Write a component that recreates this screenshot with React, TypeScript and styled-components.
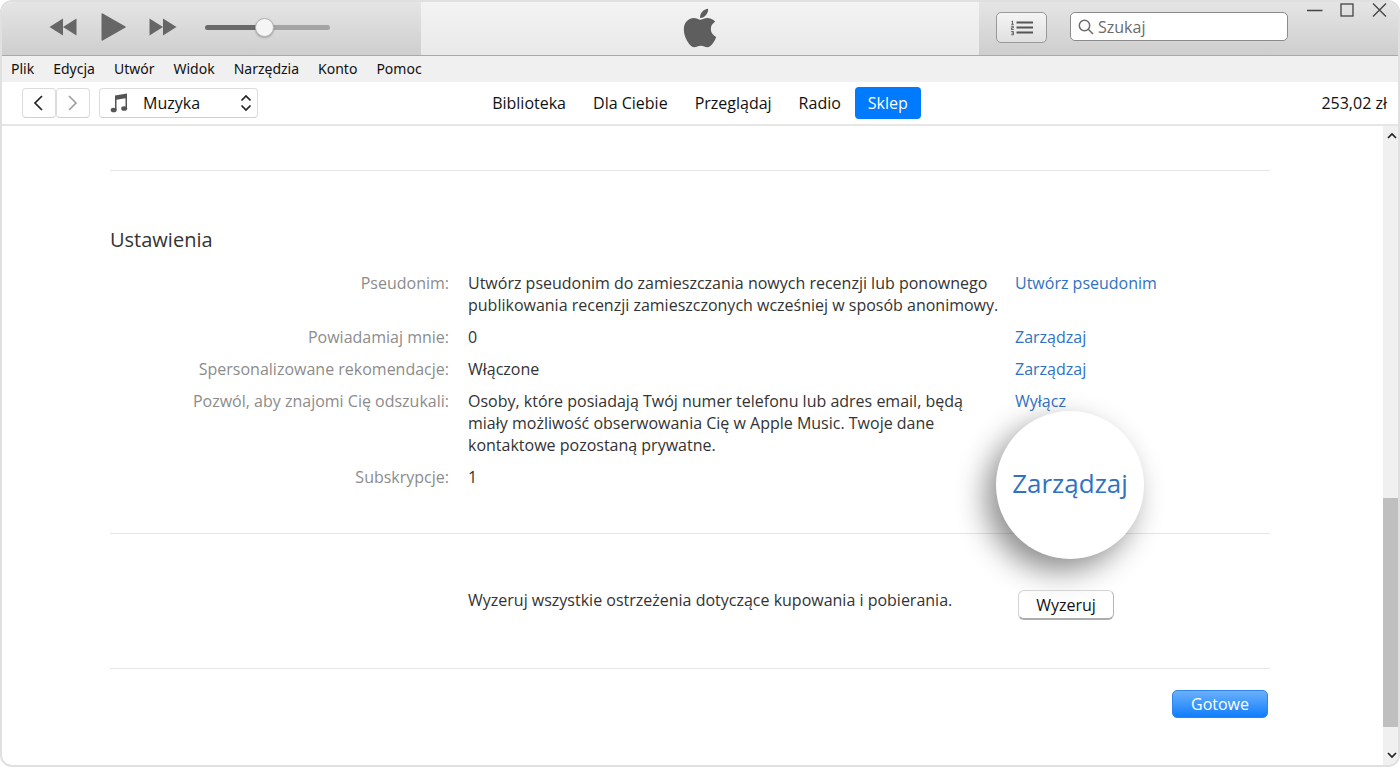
import React, { useState } from "react";
import styled, { createGlobalStyle } from "styled-components";
import { FaApple } from "react-icons/fa";

const GlobalStyle = createGlobalStyle`
  *, *::before, *::after { box-sizing: border-box; }
  body {
    margin: 0;
    background: #fff;
    color: #111;
    font-family: "Open Sans", "Noto Sans", sans-serif;
    font-size: 16px;
    line-height: 22px;
  }
  button, input, select { font: inherit; color: inherit; margin: 0; }
  button { padding: 0; border: 0; background: none; }
  svg { display: block; }
`;

const Page = styled.div`
  display: flex;
  min-height: 100vh;
  padding-bottom: 1px;
`;

const Window = styled.div`
  flex: 1;
  display: flex;
  flex-direction: column;
  border: 2px solid #e0e0e0;
  border-radius: 12px;
  overflow: hidden;
`;

const TitleBar = styled.header`
  display: grid;
  grid-template-columns: 3fr 4fr 3fr;
  height: 54px;
  border-bottom: 1px solid #a9a9a9;
  background: linear-gradient(#e5e5e5, #cecece);
`;

const Playback = styled.div`
  display: flex;
  align-items: center;
  gap: 28px;
  padding: 0 0 3px 47px;
  color: #666;
`;

const PlaybackButtons = styled.div`
  display: flex;
  align-items: center;
  gap: 22px;
`;

const Volume = styled.input<{ $level: number }>`
  appearance: none;
  width: 125px;
  height: 20px;
  background: transparent;
  &::-webkit-slider-runnable-track {
    height: 5px;
    border-radius: 3px;
    background: linear-gradient(
      to right,
      #6a6a6a ${(p) => p.$level}%,
      #a4a4a4 ${(p) => p.$level}%
    );
  }
  &::-webkit-slider-thumb {
    appearance: none;
    width: 19px;
    height: 19px;
    margin-top: -7px;
    border: 1px solid #b4b4b4;
    border-radius: 50%;
    background: #f5f5f5;
    box-shadow: 0 1px 2px rgba(0, 0, 0, 0.25);
  }
`;

const Display = styled.div`
  display: flex;
  justify-content: center;
  align-items: center;
  padding-bottom: 2px;
  background: linear-gradient(#f3f3f3, #e9e9e9);
  color: #5e5e5e;
  font-size: 44px;
`;

const TitleTools = styled.div`
  display: flex;
  justify-content: flex-end;
  padding-right: 11px;
`;

const QueueButton = styled.button`
  display: flex;
  align-items: center;
  justify-content: center;
  width: 51px;
  height: 31px;
  margin: 10px 23px 0 0;
  border: 1px solid #999;
  border-radius: 5px;
  background: linear-gradient(#f4f4f4, #e0e0e0);
`;

const Search = styled.label`
  display: flex;
  align-items: center;
  gap: 4px;
  width: 218px;
  height: 29px;
  margin: 10px 19px 0 0;
  padding: 0 7px;
  border: 1px solid #8a8a8a;
  border-radius: 5px;
  background: #fff;
  color: #6b6b6b;
  input {
    flex: 1;
    min-width: 0;
    padding: 0;
    border: 0;
    outline: 0;
    background: none;
  }
  input::placeholder { color: #6b6b6b; opacity: 1; }
`;

const WindowButtons = styled.div`
  display: flex;
  gap: 16px;
  height: 16px;
`;

const MenuBar = styled.nav`
  display: flex;
  gap: 19px;
  height: 26px;
  padding: 0 9px;
  background: #f0f0f0;
  font-family: "Noto Sans", "Open Sans", sans-serif;
  font-size: 14px;
  line-height: 26px;
`;

const Toolbar = styled.div`
  display: grid;
  grid-template-columns: 1fr auto 1fr;
  align-items: center;
  height: 44px;
  padding: 0 11px;
  border-bottom: 2px solid #e6e6e6;
`;

const ToolbarLeft = styled.div`
  display: flex;
  gap: 9px;
  padding-left: 9px;
`;

const History = styled.div`
  display: flex;
`;

const HistoryButton = styled.button`
  display: flex;
  align-items: center;
  justify-content: center;
  width: 34px;
  height: 30px;
  border: 1px solid #dcdcdc;
  border-bottom-color: #cfcfcf;
  border-radius: 4px;
`;

const Library = styled.label`
  display: grid;
  align-items: center;
  width: 159px;
  height: 30px;
  border: 1px solid #dcdcdc;
  border-bottom-color: #cfcfcf;
  border-radius: 4px;
  > * { grid-area: 1 / 1; }
  > svg { margin-left: 10px; pointer-events: none; }
  > svg:last-child { justify-self: end; margin-right: 5px; }
  select {
    appearance: none;
    width: 100%;
    height: 28px;
    padding: 0 0 0 43px;
    border: 0;
    background: transparent;
  }
`;

const Tabs = styled.nav`
  display: flex;
  gap: 1px;
`;

const Tab = styled.a<{ $active?: boolean }>`
  height: 32px;
  padding: 0 13px;
  border-radius: 4px;
  background: ${(p) => (p.$active ? "#007aff" : "transparent")};
  color: ${(p) => (p.$active ? "#fff" : "#111")};
  line-height: 32px;
  text-decoration: none;
`;

const Balance = styled.div`
  text-align: right;
`;

const Body = styled.div`
  flex: 1;
  display: flex;
`;

const Content = styled.main`
  flex: 1;
  padding: 44px 113px 24px 108px;
  color: #333;
`;

const Section = styled.section`
  border-top: 1px solid #e6e6e6;
`;

const Heading = styled.h1`
  margin: 0;
  padding: 54px 0 17px;
  font-size: 20px;
  font-weight: 400;
  line-height: 30px;
`;

const Row = styled.div`
  display: grid;
  grid-template-columns: 358px 547px 1fr;
`;

const Settings = styled.div`
  display: grid;
  row-gap: 10px;
  padding-bottom: 45px;
`;

const Label = styled.div`
  padding-right: 19px;
  color: #8c8c8c;
  text-align: right;
`;

const Value = styled.div`
  grid-column: 2;
  padding-right: 12px;
`;

const Action = styled.div`
  position: relative;
`;

const Link = styled.a`
  color: #2f72c4;
  text-decoration: none;
`;

const Magnifier = styled(Link)`
  position: absolute;
  top: -55px;
  left: -19px;
  width: 148px;
  height: 148px;
  border-radius: 50%;
  background: #fff;
  box-shadow: -10px 12px 30px rgba(0, 0, 0, 0.45);
  font-size: 26px;
  line-height: 144px;
  text-align: center;
`;

const ResetRow = styled(Row)`
  padding: 55px 0 48px;
`;

const ResetButton = styled.button`
  width: 96px;
  height: 30px;
  margin: 1px 0 0 3px;
  border: 1px solid #d4d4d4;
  border-right-color: #b4b4b4;
  border-bottom: 2px solid #adadad;
  border-radius: 6px;
  color: #111;
`;

const Footer = styled(Section)`
  display: flex;
  justify-content: flex-end;
  padding: 21px 2px 0;
`;

const DoneButton = styled.button`
  width: 96px;
  height: 28px;
  border: 1px solid #2f86ea;
  border-radius: 5px;
  background: linear-gradient(#6bb0fb, #0f7efd);
  color: #fff;
`;

const Scrollbar = styled.div`
  display: grid;
  grid-template-rows: 20px 352fr 229fr 18fr 20px;
  width: 15px;
  background: #f0f0f0;
`;

const ScrollThumb = styled.div`
  grid-row: 3;
  background: #bfbfbf;
`;

const ScrollButton = styled.button<{ $end?: boolean }>`
  grid-row: ${(p) => (p.$end ? 5 : 1)};
  display: flex;
  align-items: center;
  justify-content: flex-end;
  padding-right: 1px;
`;

function Chevron({ d, color = "#222", width = 12, height = 18 }: { d: string; color?: string; width?: number; height?: number }) {
  return (
    <svg width={width} height={height} viewBox={`0 0 ${width} ${height}`} fill="none" stroke={color} strokeWidth="1.700">
      <path d={d} />
    </svg>
  );
}

const menus = ["Plik", "Edycja", "Utwór", "Widok", "Narzędzia", "Konto", "Pomoc"];
const tabs = ["Biblioteka", "Dla Ciebie", "Przeglądaj", "Radio", "Sklep"];
const settings = [
  {
    label: "Pseudonim:",
    value: "Utwórz pseudonim do zamieszczania nowych recenzji lub ponownego publikowania recenzji zamieszczonych wcześniej w sposób anonimowy.",
    action: "Utwórz pseudonim",
  },
  { label: "Powiadamiaj mnie:", value: "0", action: "Zarządzaj" },
  { label: "Spersonalizowane rekomendacje:", value: "Włączone", action: "Zarządzaj" },
  {
    label: "Pozwól, aby znajomi Cię odszukali:",
    value: "Osoby, które posiadają Twój numer telefonu lub adres email, będą miały możliwość obserwowania Cię w Apple Music. Twoje dane kontaktowe pozostaną prywatne.",
    action: "Wyłącz",
  },
  { label: "Subskrypcje:", value: "1", action: "Zarządzaj", magnified: true },
];

export default function App() {
  const [volume, setVolume] = useState(47);
  return (
    <>
      <GlobalStyle />
      <Page>
        <Window>
          <TitleBar>
            <Playback>
              <PlaybackButtons>
                <button aria-label="Poprzedni">
                  <svg width="28" height="18" viewBox="0 0 28 18" fill="currentColor">
                    <path d="M14 .5v17L.5 9zM27.500 .5v17L14 9z" />
                  </svg>
                </button>
                <button aria-label="Odtwórz">
                  <svg width="28" height="30" viewBox="0 0 28 30" fill="currentColor">
                    <path d="M2.500 2.200Q2.500 .8 3.700 1.500L26.500 14.400Q27.400 15 26.500 15.600L3.700 28.500Q2.500 29.200 2.500 27.800z" />
                  </svg>
                </button>
                <button aria-label="Następny">
                  <svg width="28" height="18" viewBox="0 0 28 18" fill="currentColor">
                    <path d="M.5 .5v17L14 9zM14 .5v17L27.500 9z" />
                  </svg>
                </button>
              </PlaybackButtons>
              <Volume
                type="range"
                aria-label="Głośność"
                value={volume}
                $level={volume}
                onChange={(e) => setVolume(Number(e.target.value))}
              />
            </Playback>
            <Display>
              <FaApple />
            </Display>
            <TitleTools>
              <QueueButton aria-label="Kolejka">
                <svg width="24" height="16" viewBox="0 0 24 16" fill="none" stroke="#555">
                  <path strokeWidth="2" d="M6.500 2.500H23M6.500 7.500H23M6.500 12.500H23" />
                  <path strokeWidth=".9" d="M1.500 1.500L2.500 1V4.300M1.200 4.300H3.800M1.200 6.300H3.400V7.800H1.400V9.500H3.800M1.200 11.500H3.400V14.800H1.200M1.600 13.100H3.400" />
                </svg>
              </QueueButton>
              <Search>
                <svg width="16" height="16" viewBox="0 0 16 16" fill="none" stroke="currentColor" strokeWidth="1.500">
                  <circle cx="6.500" cy="6.500" r="5.200" />
                  <path d="M10.300 10.300L15 15" />
                </svg>
                <input type="text" placeholder="Szukaj" aria-label="Szukaj" />
              </Search>
              <WindowButtons>
                <button aria-label="Minimalizuj">
                  <svg width="16" height="16" viewBox="0 0 16 16" fill="none" stroke="#444" strokeWidth="1.300">
                    <path d="M0 8.500H15.500" />
                  </svg>
                </button>
                <button aria-label="Maksymalizuj">
                  <svg width="16" height="16" viewBox="0 0 16 16" fill="none" stroke="#444" strokeWidth="1.300">
                    <rect x="2" y="2" width="12" height="12" />
                  </svg>
                </button>
                <button aria-label="Zamknij">
                  <svg width="16" height="16" viewBox="0 0 16 16" fill="none" stroke="#444" strokeWidth="1.300">
                    <path d="M2 1.500L15 14.500M15 1.500L2 14.500" />
                  </svg>
                </button>
              </WindowButtons>
            </TitleTools>
          </TitleBar>
          <MenuBar>
            {menus.map((m) => (
              <button key={m}>{m}</button>
            ))}
          </MenuBar>
          <Toolbar>
            <ToolbarLeft>
              <History>
                <HistoryButton aria-label="Wstecz">
                  <Chevron d="M9 2L2 9L9 16" />
                </HistoryButton>
                <HistoryButton aria-label="Dalej">
                  <Chevron d="M2 2L9 9L2 16" color="#a0a0a0" />
                </HistoryButton>
              </History>
              <Library>
                <select aria-label="Biblioteka multimediów" defaultValue="Muzyka">
                  <option>Muzyka</option>
                </select>
                <svg width="18" height="20" viewBox="0 0 18 20" fill="#555">
                  <path d="M5 2.500L17 .5V15.500H15.500V5.300L6.500 6.800V17H5z" />
                  <ellipse cx="3.700" cy="17" rx="3" ry="2.300" />
                  <ellipse cx="14.200" cy="15.500" rx="3" ry="2.300" />
                </svg>
                <Chevron d="M1.500 6.500L6 2L10.500 6.500M1.500 11.500L6 16L10.500 11.500" />
              </Library>
            </ToolbarLeft>
            <Tabs>
              {tabs.map((t) => (
                <Tab key={t} href="#" $active={t === "Sklep"}>
                  {t}
                </Tab>
              ))}
            </Tabs>
            <Balance>253,02 zł</Balance>
          </Toolbar>
          <Body>
            <Content>
              <Section>
                <Heading>Ustawienia</Heading>
                <Settings>
                  {settings.map((s) => (
                    <Row key={s.label}>
                      <Label>{s.label}</Label>
                      <Value>{s.value}</Value>
                      <Action>
                        {s.magnified ? <Magnifier href="#">{s.action}</Magnifier> : <Link href="#">{s.action}</Link>}
                      </Action>
                    </Row>
                  ))}
                </Settings>
              </Section>
              <Section>
                <ResetRow>
                  <Value>Wyzeruj wszystkie ostrzeżenia dotyczące kupowania i pobierania.</Value>
                  <Action>
                    <ResetButton>Wyzeruj</ResetButton>
                  </Action>
                </ResetRow>
              </Section>
              <Footer>
                <DoneButton>Gotowe</DoneButton>
              </Footer>
            </Content>
            <Scrollbar>
              <ScrollButton aria-label="Przewiń w górę">
                <Chevron d="M1 6L5 2L9 6" width={10} height={8} />
              </ScrollButton>
              <ScrollThumb />
              <ScrollButton $end aria-label="Przewiń w dół">
                <Chevron d="M1 2L5 6L9 2" width={10} height={8} />
              </ScrollButton>
            </Scrollbar>
          </Body>
        </Window>
      </Page>
    </>
  );
}
